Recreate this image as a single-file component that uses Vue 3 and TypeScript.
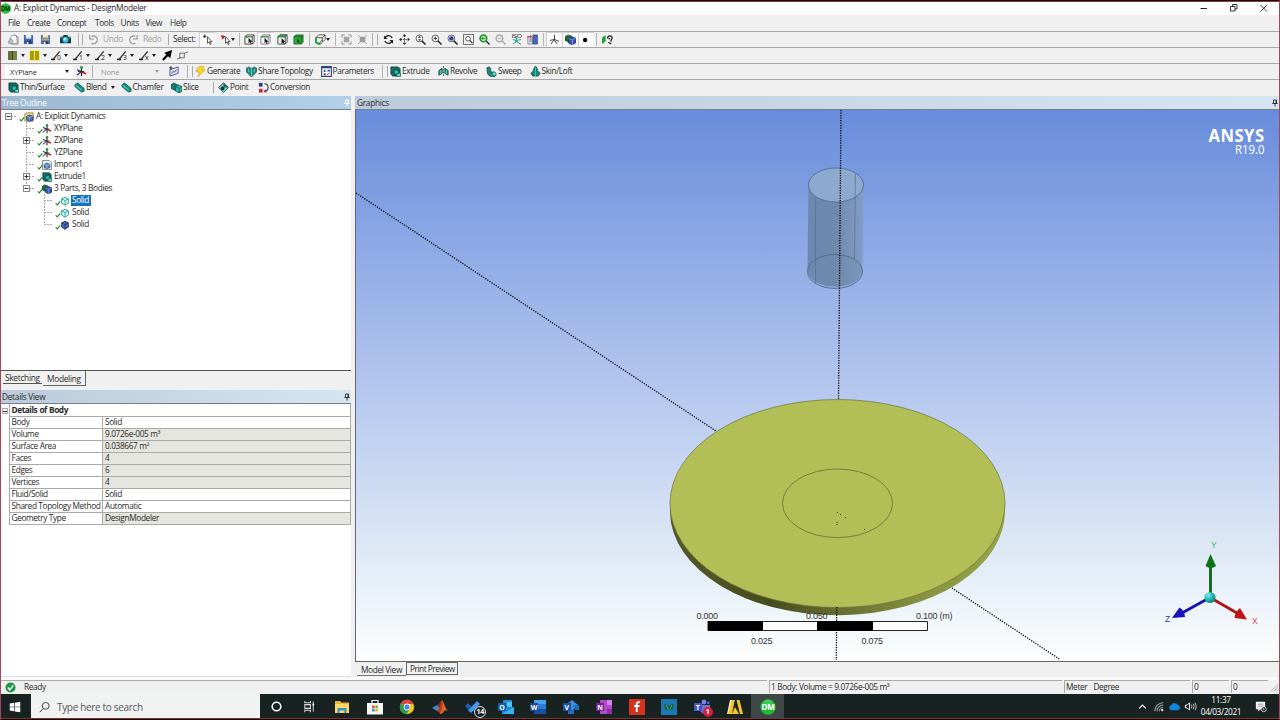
<script setup lang="ts">
/**
 * DesignModeler workspace: toolbars, tree outline, details view,
 * graphics viewport and the desktop taskbar underneath.
 */

interface Tool {
  /** Slot width in the strip */
  w: number
  icon?: string
  label?: string
  kind?: 'sep' | 'grip'
  drop?: boolean
  pressed?: boolean
  disabled?: boolean
}

interface TreeNode {
  level: number
  label: string
  icon: string
  box?: '+' | '-'
  last?: boolean
  selected?: boolean
}

const menus = [
  { label: 'File', w: 19 },
  { label: 'Create', w: 30 },
  { label: 'Concept', w: 38 },
  { label: 'Tools', w: 25.5 },
  { label: 'Units', w: 25 },
  { label: 'View', w: 24.5 },
  { label: 'Help', w: 25 },
]

const mainTools: Tool[] = [
  { icon: 'new', w: 16 },
  { icon: 'save', w: 15 },
  { icon: 'export', w: 18 },
  { icon: 'camera', w: 23 },
  { kind: 'sep', w: 2 },
  { kind: 'grip', w: 7 },
  { icon: 'undo', label: 'Undo', w: 40, disabled: true },
  { icon: 'redo', label: 'Redo', w: 40, disabled: true },
  { kind: 'grip', w: 5 },
  { label: 'Select:', w: 28 },
  { icon: 'pick', w: 17, pressed: true },
  { icon: 'pickmode', w: 22, drop: true },
  { kind: 'sep', w: 3 },
  { icon: 'vertex', w: 16 },
  { icon: 'edge', w: 17, pressed: true },
  { icon: 'face', w: 16 },
  { icon: 'body', w: 17 },
  { kind: 'sep', w: 4 },
  { icon: 'extend', w: 22, drop: true },
  { kind: 'sep', w: 5 },
  { icon: 'expand', w: 16 },
  { icon: 'shrink', w: 16 },
  { kind: 'sep', w: 5 },
  { kind: 'grip', w: 5 },
  { icon: 'rotate', w: 16 },
  { icon: 'pan', w: 16 },
  { icon: 'zoom', w: 16 },
  { icon: 'zoomin', w: 16 },
  { icon: 'zoomfit', w: 16 },
  { icon: 'zoombox', w: 16 },
  { icon: 'zoomprev', w: 16 },
  { icon: 'zoomnext', w: 16 },
  { icon: 'iso', w: 16 },
  { icon: 'look', w: 16 },
  { kind: 'sep', w: 6 },
  { icon: 'axes', w: 16, pressed: true },
  { icon: 'model', w: 16, pressed: true },
  { icon: 'point', w: 16, pressed: true },
  { kind: 'sep', w: 5 },
  { icon: 'lookat', w: 16 },
]

const penTools = ['pen0', 'pen1', 'pen2', 'pen3', 'penx']

const featureTools: Tool[] = [
  { kind: 'sep', w: 3 },
  { kind: 'grip', w: 6 },
  { icon: 'generate', label: 'Generate', w: 51 },
  { icon: 'share', label: 'Share Topology', w: 74.5 },
  { icon: 'params', label: 'Parameters', w: 60 },
  { kind: 'sep', w: 3.5 },
  { kind: 'grip', w: 6 },
  { icon: 'extrude', label: 'Extrude', w: 48 },
  { icon: 'revolve', label: 'Revolve', w: 48 },
  { icon: 'sweep', label: 'Sweep', w: 43.5 },
  { icon: 'skin', label: 'Skin/Loft', w: 50 },
]

const modifyTools: Tool[] = [
  { icon: 'extrude', label: 'Thin/Surface', w: 66 },
  { icon: 'blend', label: 'Blend', w: 46.5, drop: true },
  { icon: 'blend', label: 'Chamfer', w: 50.5 },
  { icon: 'slice', label: 'Slice', w: 37 },
  { kind: 'grip', w: 10 },
  { icon: 'diamond', label: 'Point', w: 40 },
  { icon: 'convert', label: 'Conversion', w: 60 },
]

const tree: TreeNode[] = [
  { level: 0, label: 'A: Explicit Dynamics', icon: 'project', box: '-' },
  { level: 1, label: 'XYPlane', icon: 'plane' },
  { level: 1, label: 'ZXPlane', icon: 'plane', box: '+' },
  { level: 1, label: 'YZPlane', icon: 'plane' },
  { level: 1, label: 'Import1', icon: 'import' },
  { level: 1, label: 'Extrude1', icon: 'extrude', box: '+' },
  { level: 1, label: '3 Parts, 3 Bodies', icon: 'model', box: '-', last: true },
  { level: 2, label: 'Solid', icon: 'solid', selected: true },
  { level: 2, label: 'Solid', icon: 'solid' },
  { level: 2, label: 'Solid', icon: 'solidblue', last: true },
]

const details = [
  { name: 'Body', value: 'Solid' },
  { name: 'Volume', value: '9.0726e-005 m³', locked: true },
  { name: 'Surface Area', value: '0.038667 m²', locked: true },
  { name: 'Faces', value: '4', locked: true },
  { name: 'Edges', value: '6', locked: true },
  { name: 'Vertices', value: '4', locked: true },
  { name: 'Fluid/Solid', value: 'Solid' },
  { name: 'Shared Topology Method', value: 'Automatic' },
  { name: 'Geometry Type', value: 'DesignModeler', locked: true },
]

const apps = [
  'cortana', 'taskview', 'folder', 'store', 'chrome', 'matlab', 'todo', 'outlook',
  'word', 'visio', 'onenote', 'fing', 'workbench', 'teams', 'ansys', 'dm',
]

const guideX = (level: number) => 7 + level * 18
</script>

<template>
  <!-- Icon sprite -->
  <svg class="sprite" aria-hidden="true">
    <symbol id="i-new" viewBox="0 0 12 12"><path d="M4 1.500h5l1 8-6 1-3-2z" fill="#fff" stroke="#a4a8ba" /><path d="M0 9.500l3-5 3 3-3 3.500z" fill="#b9bed2" stroke="#777" stroke-width=".6" /><path d="M7 .7l4 3V11H4" fill="none" stroke="#666" stroke-width=".8" /></symbol>
    <symbol id="i-save" viewBox="0 0 12 12"><path d="M1 1h9l1 1v9H1z" fill="#3f62ad" /><path d="M3 1h6v4H3z" fill="#e7efff" /><path d="M3 7.500h6V11H3z" fill="#1d3264" /><path d="M4 8.500h2V11H4z" fill="#eee" /></symbol>
    <symbol id="i-export" viewBox="0 0 12 12"><path d="M1 1h9l1 1v9H1z" fill="#5573ad" /><path d="M3 1h6v3H3z" fill="#efe7c0" /><path d="M2 5h8v2H2z" fill="#c0a95a" /><path d="M3 8h6v3H3z" fill="#2b3d66" /><path d="M4 8.500h2V11H4z" fill="#eee" /></symbol>
    <symbol id="i-camera" viewBox="0 0 12 12"><path d="M0 3h3l1-2h4l1 2h3v7H0z" fill="#20303a" /><circle cx="6" cy="6.300" r="3.300" fill="#2fc7e0" /><circle cx="5.300" cy="5.600" r="1.300" fill="#c7fbff" /><path d="M0 3h2v1.500H0zM10 3h2v1.500h-2z" fill="#4fa8b8" /></symbol>
    <symbol id="i-undo" viewBox="0 0 12 12"><path d="M4 2.500a4.300 4.300 0 1 1 0 7.700M2 1v4.500h4.500" fill="none" stroke="#8f8f8f" stroke-width="1.200" /></symbol>
    <symbol id="i-redo" viewBox="0 0 12 12"><path d="M8 2.500a4.300 4.300 0 1 0 0 7.700M10 1v4.500H5.500" fill="none" stroke="#8f8f8f" stroke-width="1.200" /></symbol>
    <symbol id="i-pick" viewBox="0 0 12 12"><path d="M3 .5v4M1 2.500h4" stroke="#222" /><path d="M6 3v7l1.700-1.500 1.300 3 1-.5-1.300-2.700H11z" fill="#fff" stroke="#222" stroke-width=".8" /></symbol>
    <symbol id="i-pickmode" viewBox="0 0 12 12"><path d="M1 1l5 1.500L2.500 6z" fill="#b02020" /><path d="M6 3v7l1.700-1.500 1.300 3 1-.5-1.300-2.700H11z" fill="#fff" stroke="#222" stroke-width=".8" /></symbol>
    <symbol id="i-vertex" viewBox="0 0 12 12"><path d="M1 3l2-2h8v8l-2 2H1zM1 3h8v8M9 3l2-2" fill="none" stroke="#2c3a2c" stroke-width=".9" /><circle cx="3" cy="3" r="1.600" fill="#35b835" /><path d="M5 4v6l1.400-1.200L7.500 11l.8-.5-1-2H9z" fill="#111" /></symbol>
    <symbol id="i-edge" viewBox="0 0 12 12"><path d="M1 3l2-2h8v8l-2 2H1zM1 3h8v8M9 3l2-2" fill="none" stroke="#667" stroke-width=".9" /><path d="M1 3h8" stroke="#35a035" stroke-width="1.300" /><path d="M5 4v6l1.400-1.200L7.500 11l.8-.5-1-2H9z" fill="#111" /></symbol>
    <symbol id="i-face" viewBox="0 0 12 12"><path d="M1 3l2-2h8v8l-2 2H1zM1 3h8v8M9 3l2-2" fill="none" stroke="#2c3a2c" stroke-width=".9" /><path d="M1 3l2-2h8L9 3z" fill="#35b845" stroke="#1c5c24" stroke-width=".6" /><path d="M5 4.500v6l1.400-1.200L7.500 11l.8-.5-1-2H9z" fill="#111" /></symbol>
    <symbol id="i-body" viewBox="0 0 12 12"><path d="M1 3l2-2h8v8l-2 2H1z" fill="#27b13a" stroke="#0c5016" stroke-width=".8" /><path d="M1 3h8v8M9 3l2-2" fill="none" stroke="#0c5016" stroke-width=".8" /><path d="M4.500 4.500v5l1.200-1L6.500 10l.6-.4-.7-1.500h1.300z" fill="#0a250d" /></symbol>
    <symbol id="i-extend" viewBox="0 0 12 12"><path d="M1 4l3-3h7L8 4zM8 4v5l3-3V1" fill="#fff" stroke="#222" stroke-width=".8" /><path d="M1 4v5l3 2 3-1" fill="none" stroke="#15a035" stroke-width="2" /><path d="M5 9.500l3-3" stroke="#c22" /></symbol>
    <symbol id="i-expand" viewBox="0 0 12 12"><path d="M3 3h6v6H3z" fill="#a5a5a5" /><path d="M1 4V1h3M8 1h3v3M11 8v3H8M4 11H1V8" fill="none" stroke="#8d8d8d" /></symbol>
    <symbol id="i-shrink" viewBox="0 0 12 12"><path d="M3 3h6v6H3z" fill="#999" /><path d="M1 1l2 2M11 1L9 3M1 11l2-2M11 11L9 9" stroke="#999" /></symbol>
    <symbol id="i-rotate" viewBox="0 0 12 12"><path d="M2 5a4.200 4.200 0 0 1 8-.7M10 7a4.200 4.200 0 0 1-8 .7" fill="none" stroke="#222" stroke-width="1.300" /><path d="M1 1.500v4h4zM11 10.500v-4H7z" fill="#222" /></symbol>
    <symbol id="i-pan" viewBox="0 0 12 12"><path d="M6 2v8M2 6h8" stroke="#333" stroke-dasharray="1.500 1" /><path d="M6 0l2 2.500H4zM6 12l2-2.500H4zM0 6l2.500-2v4zM12 6L9.500 4v4z" fill="#222" /></symbol>
    <symbol id="i-lens" viewBox="0 0 12 12"><circle cx="4.800" cy="4.800" r="3.700" fill="#fff" fill-opacity=".7" stroke="#444" stroke-width=".9" /><path d="M7.500 7.500l4 4" stroke="#222" stroke-width="1.600" /></symbol>
    <symbol id="i-zoom" viewBox="0 0 12 12"><use href="#i-lens" /><path d="M4.800 2l1.700 2H3.100zM4.800 7.600l1.700-2H3.100z" fill="#333" /></symbol>
    <symbol id="i-zoomin" viewBox="0 0 12 12"><use href="#i-lens" /><path d="M4.800 2.800v4M2.800 4.800h4" stroke="#333" /></symbol>
    <symbol id="i-zoomfit" viewBox="0 0 12 12"><use href="#i-lens" /><circle cx="4.800" cy="4.800" r="2.400" fill="#1c2c80" /><path d="M3.500 3.500l2.600 2.600" stroke="#8fa5e8" stroke-width=".7" /></symbol>
    <symbol id="i-zoombox" viewBox="0 0 12 12"><path d="M.5.500h11v11H.5z" fill="#eee" stroke="#444" stroke-width=".8" /><circle cx="5.500" cy="5.200" r="2.500" fill="#fff" stroke="#333" stroke-width=".8" /><path d="M7.300 7l3 3" stroke="#222" stroke-width="1.200" /></symbol>
    <symbol id="i-zoomprev" viewBox="0 0 12 12"><circle cx="4.800" cy="4.800" r="3.600" fill="#e8ffe8" stroke="#179a1d" stroke-width="1.800" /><path d="M3 4.800h4M4.800 3L3 4.800l1.800 1.800" fill="none" stroke="#147a18" /><path d="M8 8l3.500 3.500" stroke="#222" stroke-width="1.500" /></symbol>
    <symbol id="i-zoomnext" viewBox="0 0 12 12"><circle cx="4.800" cy="4.800" r="3.600" fill="#eee" stroke="#aaa" stroke-width="1.600" /><path d="M3 4.800h4" stroke="#aaa" /><path d="M8 8l3.500 3.500" stroke="#aaa" stroke-width="1.500" /></symbol>
    <symbol id="i-iso" viewBox="0 0 12 12"><text x=".5" y="4.200" font-size="5.500" textLength="11" lengthAdjust="spacingAndGlyphs" fill="#111">ISO</text><path d="M6 4v5M6 7L2 6M6 7l5-1M6 8l-4 3M6 8l4 3" stroke="#1d9a8a" fill="none" /><circle cx="6" cy="7.500" r="1.500" fill="#18b0a0" /><path d="M9 10l2 1" stroke="#c33" /></symbol>
    <symbol id="i-look" viewBox="0 0 12 12"><path d="M6.500 1h5v10h-5z" fill="#4a66bd" stroke="#1b2c66" stroke-width=".6" /><path d="M1 3h5v8H1z" fill="#e6ecff" stroke="#556" stroke-width=".7" /><path d="M2.500 5h3v4h-3z" fill="#9aa7cf" /><path d="M0 3h5M4 1v4" stroke="#c33" /></symbol>
    <symbol id="i-axes" viewBox="0 0 12 12"><path d="M6 1v6M6 6l5 2M6 6L1 7M6 6l-4 5M6 7l3 4" stroke="#222" stroke-width=".9" fill="none" /></symbol>
    <symbol id="i-model" viewBox="0 0 12 12"><path d="M0 3l3-2 4 1v5L4 9 0 7z" fill="#1c6b32" stroke="#0b2e18" stroke-width=".5" /><path d="M4 5l4-2 4 1.500v5L8 12 4 10z" fill="#3550ad" stroke="#111c50" stroke-width=".6" /><path d="M4 5l4 1.500L12 4.500M8 6.500V12" fill="none" stroke="#a7b8ee" stroke-width=".7" /></symbol>
    <symbol id="i-point" viewBox="0 0 12 12"><circle cx="4.500" cy="6.500" r="2.400" fill="#000" /></symbol>
    <symbol id="i-lookat" viewBox="0 0 12 12"><path d="M0 4l4-3v7L0 11z" fill="#1fa33a" /><path d="M6 5c0-4 5-4 5-.5 0 2-2 1.500-1 4M7 9l3 2" fill="none" stroke="#222" stroke-width="1.400" /><circle cx="8" cy="5" r="1" fill="#222" /></symbol>

    <symbol id="i-pen" viewBox="0 0 12 12"><path d="M2.500 10L9.500 1.500" stroke="#333" stroke-width="1.500" /><path d="M0 10.300h4.500" stroke="#222" stroke-width="1.700" /></symbol>
    <symbol id="i-pen0" viewBox="0 0 12 12"><use href="#i-pen" /><text x="6.500" y="11" font-size="7.500" fill="#222">0</text></symbol>
    <symbol id="i-pen1" viewBox="0 0 12 12"><use href="#i-pen" /><text x="6.500" y="11" font-size="7.500" fill="#222">1</text></symbol>
    <symbol id="i-pen2" viewBox="0 0 12 12"><use href="#i-pen" /><text x="6.500" y="11" font-size="7.500" fill="#222">2</text></symbol>
    <symbol id="i-pen3" viewBox="0 0 12 12"><use href="#i-pen" /><text x="6.500" y="11" font-size="7.500" fill="#222">3</text></symbol>
    <symbol id="i-penx" viewBox="0 0 12 12"><use href="#i-pen" /><text x="6.500" y="11" font-size="7.500" fill="#222">x</text></symbol>
    <symbol id="i-arrow" viewBox="0 0 12 12"><path d="M1 11l5-5.500" stroke="#000" stroke-width="2.400" /><path d="M11 0L9 9 2.500 3z" fill="#000" /></symbol>
    <symbol id="i-coedge" viewBox="0 0 12 12"><path d="M0 10l4-1.500M3 3.500h5v5H3zM8 3.500L12 2" fill="none" stroke="#555" stroke-width=".9" /></symbol>

    <symbol id="i-plane" viewBox="0 0 12 12"><path d="M6 2v9" stroke="#222" stroke-width="1.300" /><path d="M6 6L1 4M6 6l-5 4" stroke="#262a78" stroke-width="1.200" /><path d="M6 6.500l5 2" stroke="#c01818" stroke-width="1.700" /><circle cx="6" cy="1.600" r="1.500" fill="#1d9a2b" /><path d="M2 6h7" stroke="#222" stroke-width=".9" /></symbol>
    <symbol id="i-sketch" viewBox="0 0 12 12"><path d="M1 4l9-3v7l-9 3z" fill="#dfe3f7" stroke="#3b3f86" stroke-width=".9" /><path d="M3 8c1-4 3 1 5-4" fill="none" stroke="#3b3f86" /><path d="M0 2h4M2 0v4" stroke="#222" stroke-width=".9" /></symbol>
    <symbol id="i-generate" viewBox="0 0 12 12"><path d="M5 0h5L7.500 4H11L3 12l2-5.500H1.500z" fill="#ffd91a" stroke="#a98600" stroke-width=".5" /><path d="M1 2l1.500 1M.5 5H2" stroke="#b89a10" stroke-width=".8" /></symbol>
    <symbol id="i-share" viewBox="0 0 12 12"><path d="M0 3l3-2 3 2 3-2 3 2v3l-6 6-6-6z" fill="#1f8a80" stroke="#0c3f3c" stroke-width=".7" /><path d="M3 3v4M6 3v8M9 3v4" stroke="#9be8dd" stroke-width=".7" /></symbol>
    <symbol id="i-params" viewBox="0 0 12 12"><path d="M.7.700h10.600v10.600H.7z" fill="#fff" stroke="#27467c" stroke-width="1.200" /><path d="M1 1h10v1.500H1z" fill="#27467c" /><path d="M3 4v2.500h2V4zM7 4h3v2H7z" fill="#2d58b8" /><path d="M3 8h2v2H3z" fill="#333" /><path d="M6.500 9.500l3-2" stroke="#c23" /></symbol>
    <symbol id="i-extrude" viewBox="0 0 12 12"><path d="M1 1h8l2 2v8H3L1 9z" fill="#126d64" stroke="#07322e" stroke-width=".8" /><path d="M4.500 4.500H9V9H4.500z" fill="#2fc0b0" stroke="#083d38" stroke-width=".7" /><path d="M7.500 8h4v3.500h-4z" fill="#4fdccb" stroke="#083d38" stroke-width=".5" /></symbol>
    <symbol id="i-revolve" viewBox="0 0 12 12"><path d="M4.500 2.500L1 5v5l3.500-2zM7.500 2.500L11 5v5L7.500 8z" fill="#2aa598" stroke="#0c4a44" stroke-width="1" /><path d="M6 0v12" stroke="#0c4a44" stroke-width=".9" stroke-dasharray="2 1" /><path d="M3 4.500v4M9 4.500v4" stroke="#a2eee4" stroke-width=".6" /></symbol>
    <symbol id="i-sweep" viewBox="0 0 12 12"><path d="M1 2c2-2 5 0 4 2s1 3 3 2.500S12 8 10.500 10.500 3 12 1.500 8z" fill="#178a7e" stroke="#093f3a" stroke-width=".8" /><ellipse cx="9" cy="8.600" rx="1.800" ry="1.500" fill="#5adccd" /></symbol>
    <symbol id="i-skin" viewBox="0 0 12 12"><path d="M6 0l2 3v2l3 3-2 3H3L1 8l3-3V3z" fill="#178a7e" stroke="#093f3a" stroke-width=".8" /><path d="M6 1v10" stroke="#49cdbd" /></symbol>
    <symbol id="i-blend" viewBox="0 0 12 12"><path d="M1 3l3-2 7 6v3l-3 1-7-6z" fill="#178a7e" stroke="#0b4f48" stroke-width=".8" /><path d="M2 3.500L8.500 9" stroke="#3cc8b8" stroke-width="1.200" /></symbol>
    <symbol id="i-slice" viewBox="0 0 12 12"><path d="M0 3l3-2 4 2v5L4 9 0 7z" fill="#157a70" stroke="#083d38" stroke-width=".7" /><path d="M5 5l3-2 4 2v5l-3 2-4-2z" fill="#2fb5a7" stroke="#083d38" stroke-width=".7" /><path d="M5 5l4 2 3-2M9 7v5" fill="none" stroke="#083d38" stroke-width=".6" /></symbol>
    <symbol id="i-diamond" viewBox="0 0 12 12"><path d="M6 1l5.500 5L6 11.500.5 6z" fill="#8fc4bf" stroke="#13635b" /><path d="M6 1l5.500 5L6 6z" fill="#17655d" /><circle cx="5" cy="7" r="2" fill="#0a3a36" /></symbol>
    <symbol id="i-convert" viewBox="0 0 12 12"><path d="M1 1h4v4H1z" fill="#223a8a" /><path d="M1 7.500h4v4H1z" fill="#c72a35" /><path d="M7 2c3 0 4 2 4 4s-1 4-4 4" fill="none" stroke="#333" stroke-width="1.100" /><path d="M6 10l3-2v4z" fill="#b02030" /></symbol>
    <symbol id="i-project" viewBox="0 0 12 12"><path d="M1 2l3-1h7v10H1z" fill="#f0ea86" stroke="#6d6a2d" stroke-width=".8" /><path d="M3 5l3.500-1.500L11 5v4.500L6.500 11.500 3 9.500z" fill="#4f6bc0" stroke="#14204f" stroke-width=".7" /><path d="M3 5l3.500 1.500L11 5M6.500 6.500V11" fill="none" stroke="#c3d0f7" stroke-width=".6" /></symbol>
    <symbol id="i-import" viewBox="0 0 12 12"><path d="M.7.700H9L11.300 3v8.300H.7z" fill="#f3f5fa" stroke="#555" stroke-width=".8" /><path d="M2.500 5L6 3.500 9.500 5v4L6 10.500 2.500 9z" fill="#4a8ab8" stroke="#1a3854" stroke-width=".7" /><path d="M2.500 5L6 6.500 9.500 5M6 6.500v4" fill="none" stroke="#c8e6f5" stroke-width=".6" /></symbol>
    <symbol id="i-solid" viewBox="0 0 12 12"><path d="M2 3.500L6 1.500l4 2v5L6 11 2 8.500z" fill="#d9faf6" stroke="#1b9c90" stroke-width="1.100" /><path d="M2 3.500l4 2 4-2M6 5.500V11" fill="none" stroke="#1b9c90" /></symbol>
    <symbol id="i-solidblue" viewBox="0 0 12 12"><path d="M2 3.500L6 1.500l4 2v5L6 11 2 8.500z" fill="#5068c0" stroke="#1c2866" stroke-width="1.100" /><path d="M2 3.500l4 2 4-2M6 5.500V11" fill="none" stroke="#1c2866" stroke-width=".9" /></symbol>
    <symbol id="i-check" viewBox="0 0 8 8"><path d="M1 4.500l2 2L7 1.800" fill="none" stroke="#1c8a22" stroke-width="1.500" /></symbol>
    <symbol id="i-pin" viewBox="0 0 8 8"><path d="M2.500 1h3v3.500h-3zM1.300 4.500h5.400M4 4.500V7.500M5 1v3.500" fill="none" stroke="currentColor" stroke-width=".9" /></symbol>

    <symbol id="i-windows" viewBox="0 0 16 16"><path d="M2 4l5-.8v4.500H2zM7.700 3.100L14 2v5.700H7.700zM2 8.400h5v4.500L2 12.100zM7.700 8.400H14v5.700L7.700 13z" fill="#fff" /></symbol>
    <symbol id="i-search" viewBox="0 0 16 16"><circle cx="9.500" cy="6" r="4.200" fill="none" stroke="#333" stroke-width="1.100" /><path d="M6.500 9.300L2 13.800" stroke="#333" stroke-width="1.200" /></symbol>
    <symbol id="i-cortana" viewBox="0 0 16 16"><circle cx="8" cy="8" r="4.600" fill="none" stroke="#fff" stroke-width="1.700" /></symbol>
    <symbol id="i-taskview" viewBox="0 0 16 16"><path d="M3 2v2h6V2M3 14v-2h6v2M3 6h6v4H3z" fill="none" stroke="#ddd" stroke-width="1.100" /><path d="M12 2.500v11" stroke="#ddd" /><path d="M11.200 5h1.800v2h-1.800z" fill="#fff" /></symbol>
    <symbol id="i-folder" viewBox="0 0 16 16"><path d="M1 2h5l1.500 1.500H15V14H1z" fill="#e9b53a" /><path d="M1 5h14v9H1z" fill="#ffd767" /><path d="M3.500 9h9v5h-2v-2.500h-5V14h-2z" fill="#3c8fc7" /></symbol>
    <symbol id="i-store" viewBox="0 0 16 16"><path d="M5 5V1.500h6V5" fill="none" stroke="#fff" stroke-width="1.200" /><path d="M0 4h16v11.500H0z" fill="#f7f7f7" /><path d="M5 6.500h2.700v2.700H5z" fill="#e5502b" /><path d="M8.300 6.500H11v2.700H8.300z" fill="#7cb82f" /><path d="M5 9.800h2.700v2.700H5z" fill="#2a9fe0" /><path d="M8.300 9.800H11v2.700H8.300z" fill="#f7b50c" /></symbol>
    <symbol id="i-chrome" viewBox="0 0 16 16"><circle cx="8" cy="8" r="7.200" fill="#f2c313" /><path d="M8 8L1.800 4.400A7.200 7.200 0 0 1 14.500 5H8z" fill="#dc4433" /><path d="M8 8L1.800 4.400A7.200 7.200 0 0 0 7.500 15.200L11 9.500z" fill="#2c9c4a" /><circle cx="8" cy="8" r="3.400" fill="#fff" /><circle cx="8" cy="8" r="2.600" fill="#4285f4" /></symbol>
    <symbol id="i-matlab" viewBox="0 0 16 16"><path d="M0 9l5-3 3 3-3 3z" fill="#4a86c0" /><path d="M5 6c3-1 3-4 5-5l-2 8z" fill="#8a2a1a" /><path d="M10 1c2 2 3 8 6 11-2-1-3-1-4 0-1 2-2 3-4 3 0-2-1-3-3-3 3-2 4-7 5-11z" fill="#e0662a" /><path d="M10 1c1 4 1 7-2 14 0-2-1-3-3-3 3-2 4-7 5-11z" fill="#b63a1d" /></symbol>
    <symbol id="i-todo" viewBox="0 0 16 16"><path d="M0 7l3-3 4 4-3.200 3.200z" fill="#1f5aa8" /><path d="M3 11.500L12 2l3 3-9 9z" fill="#4596ec" /></symbol>
    <symbol id="i-outlook" viewBox="0 0 16 16"><path d="M5 1h9v6H5z" fill="#2a8ad8" /><path d="M9 3h5v5H9z" fill="#50c5f5" /><path d="M4 8h12v7H4z" fill="#1b86d3" /><path d="M4 15l12-7v7z" fill="#35b2f0" /><path d="M0 4h8v8H0z" fill="#0c5ea8" /><text class="glyph" x="1.200" y="10.500">O</text></symbol>
    <symbol id="i-word" viewBox="0 0 16 16"><path d="M4 1h12v4.500H4z" fill="#48a5ee" /><path d="M4 5h12v5H4z" fill="#2b7cd3" /><path d="M4 10h12v5H4z" fill="#1a4fa3" /><path d="M0 4h8v8H0z" fill="#174a96" /><text class="glyph" x=".7" y="10.500">W</text></symbol>
    <symbol id="i-visio" viewBox="0 0 16 16"><path d="M9 1l6 5-5 5H5V4z" fill="#3d8fd8" /><path d="M10 6h6v5h-4z" fill="#1f6fc0" /><path d="M5 11h6v4H5z" fill="#2f66b5" /><path d="M0 4h8v8H0z" fill="#1853a0" /><text class="glyph" x="1.500" y="10.500">V</text></symbol>
    <symbol id="i-onenote" viewBox="0 0 16 16"><path d="M4 1h12v14H4z" fill="#b04bc8" /><path d="M11 1h5v5h-5z" fill="#d086e8" /><path d="M11 10h5v5h-5z" fill="#8e2fa8" /><path d="M0 4h8v8H0z" fill="#76219a" /><text class="glyph" x="1.300" y="10.500">N</text></symbol>
    <symbol id="i-fing" viewBox="0 0 16 16"><path d="M0 0h16v16H0z" fill="#d4321f" /><path d="M11 3.500c-2-1-3.300 0-3.300 2V13M5 7h5.500" fill="none" stroke="#fff" stroke-width="1.900" /></symbol>
    <symbol id="i-workbench" viewBox="0 0 16 16"><path d="M0 0h16v16H0z" fill="#1c78b4" /><path d="M3 5l4 1 1 2 1-2 4-1-1.500 6L8 10l-3.500 1z" fill="#1b5c3c" /><path d="M5 6l2 4M11 6L9 10" stroke="#3fae6a" /></symbol>
    <symbol id="i-teams" viewBox="0 0 16 16"><circle cx="10" cy="3" r="2.400" fill="#7b83eb" /><circle cx="14.300" cy="3.800" r="1.500" fill="#5059c9" /><path d="M6 6h10v5a4 4 0 0 1-4 4c-3 0-5-1-6-4z" fill="#6a72dc" /><path d="M0 4h8v8H0z" fill="#4b53bc" /><text class="glyph" x="1.700" y="10.500">T</text></symbol>
    <symbol id="i-ansys" viewBox="0 0 16 16"><path d="M3 1h4.500L4 15H0z" fill="#f3efe0" /><path d="M4.500 1h3.200L5 15H1z" fill="#f6c62a" /><path d="M8 8l4 7H5z" fill="#f6c62a" /><path d="M9.500 1h3L16 15h-3z" fill="#f6c62a" /></symbol>
    <symbol id="i-dm" viewBox="0 0 16 16"><circle cx="8" cy="8" r="7.700" fill="#22b838" /><circle cx="8" cy="5" r="4.500" fill="#55d868" fill-opacity=".6" /><text x="1.500" y="11" font-size="8.500" font-weight="700" textLength="13" lengthAdjust="spacingAndGlyphs" fill="#fff">DM</text></symbol>
  </svg>

  <div class="screen">
    <div class="titlebar">
      <svg class="appicon" viewBox="0 0 12 12"><circle cx="6" cy="6" r="5.800" fill="#28c437" /><text x="1" y="9" font-size="7.500" font-weight="700" textLength="10" lengthAdjust="spacingAndGlyphs" fill="#062c0a">DM</text></svg>
      <span class="apptitle">A: Explicit Dynamics - DesignModeler</span>
      <div class="wincontrols">
        <svg viewBox="0 0 10 10"><path d="M1.500 5.500h6.500" stroke="#222" /></svg>
        <svg viewBox="0 0 10 10"><path d="M1.500 3.500h4.500v4.500h-4.500zM3.500 3.500v-2h4.500v4.500h-2" fill="none" stroke="#222" stroke-width=".9" /></svg>
        <svg viewBox="0 0 10 10"><path d="M1.500 2l6.500 6.500M8 2l-6.500 6.500" stroke="#222" stroke-width=".9" /></svg>
      </div>
    </div>

    <div class="menubar">
      <span v-for="m in menus" :key="m.label" :style="{ width: m.w + 'px' }">{{ m.label }}</span>
    </div>

    <div class="strip">
      <div
        v-for="(t, i) in mainTools"
        :key="i"
        class="tool"
        :class="[t.kind, { pressed: t.pressed, disabled: t.disabled, labelled: t.label, bare: !t.icon }]"
        :style="{ width: t.w + 'px' }"
      >
        <svg v-if="t.icon" class="ico"><use :href="'#i-' + t.icon" /></svg>
        <span v-if="t.label">{{ t.label }}</span>
        <i v-if="t.drop" class="caret" />
      </div>
    </div>

    <div class="strip pens">
      <div class="tool pen"><i class="swatch olive" /><i class="caret" /></div>
      <div class="tool pen"><i class="swatch yellow" /><i class="caret" /></div>
      <div v-for="p in penTools" :key="p" class="tool pen">
        <svg class="ico"><use :href="'#i-' + p" /></svg><i class="caret" />
      </div>
      <svg class="ico arrow"><use href="#i-arrow" /></svg>
      <svg class="ico coedge"><use href="#i-coedge" /></svg>
    </div>

    <div class="strip">
      <div class="combo plane-combo"><span>XYPlane</span><i class="caret" /></div>
      <div class="tool planebtn"><svg class="ico"><use href="#i-plane" /></svg></div>
      <div class="tool sep rule" />
      <div class="combo sketch-combo"><span>None</span><i class="caret" /></div>
      <div class="tool sketchbtn"><svg class="ico"><use href="#i-sketch" /></svg></div>
      <div
        v-for="(t, i) in featureTools"
        :key="i"
        class="tool"
        :class="[t.kind, { labelled: t.label }]"
        :style="{ width: t.w + 'px' }"
      >
        <svg v-if="t.icon" class="ico"><use :href="'#i-' + t.icon" /></svg>
        <span v-if="t.label">{{ t.label }}</span>
      </div>
    </div>

    <div class="strip modify">
      <div
        v-for="(t, i) in modifyTools"
        :key="i"
        class="tool"
        :class="[t.kind, { labelled: t.label }]"
        :style="{ width: t.w + 'px' }"
      >
        <svg v-if="t.icon" class="ico"><use :href="'#i-' + t.icon" /></svg>
        <span v-if="t.label">{{ t.label }}</span>
        <i v-if="t.drop" class="caret" />
      </div>
    </div>

    <div class="workspace">
      <div class="side">
        <div class="panel-head active">
          <span>Tree Outline</span>
          <svg class="pin"><use href="#i-pin" /></svg>
        </div>
        <div class="tree">
          <div v-for="(n, i) in tree" :key="i" class="node">
            <svg class="guide" height="12" :width="guideX(n.level) + 9">
              <path
                v-if="n.level > 0"
                :d="`M${guideX(n.level) + 0.5} 0V${n.last ? 6 : 12}`"
                stroke="#aaa"
                stroke-dasharray="2 1"
              />
              <path :d="`M${guideX(n.level)} 6.500h9`" stroke="#aaa" stroke-dasharray="2 1" />
              <g v-if="n.box">
                <rect :x="guideX(n.level) - 2.5" y="3.500" width="6" height="6" fill="#fff" stroke="#888" />
                <path :d="`M${guideX(n.level) - 1.5} 6.500h4`" stroke="#333" />
                <path v-if="n.box === '+'" :d="`M${guideX(n.level) + 0.5} 4.500v4`" stroke="#333" />
              </g>
            </svg>
            <svg class="check"><use href="#i-check" /></svg>
            <svg class="node-icon"><use :href="'#i-' + n.icon" /></svg>
            <span class="node-label" :class="{ selected: n.selected }">{{ n.label }}</span>
          </div>
        </div>
        <div class="side-tabs">
          <span class="tab-sketching">Sketching</span>
          <span class="tab-modeling">Modeling</span>
        </div>
        <div class="panel-head">
          <span>Details View</span>
          <svg class="pin"><use href="#i-pin" /></svg>
        </div>
        <div class="details">
          <div class="gutter"><i class="collapse" /></div>
          <div class="grid">
            <div class="grid-title">Details of Body</div>
            <div v-for="d in details" :key="d.name" class="grid-row">
              <span class="grid-name">{{ d.name }}</span>
              <span class="grid-value" :class="{ locked: d.locked }">{{ d.value }}</span>
            </div>
          </div>
        </div>
      </div>

      <div class="graphics">
        <div class="panel-head">
          <span>Graphics</span>
          <svg class="pin"><use href="#i-pin" /></svg>
        </div>
        <svg class="viewport" viewBox="356 110 923 551" preserveAspectRatio="none">
          <defs>
            <linearGradient id="sky" x1="0" y1="0" x2="0" y2="1">
              <stop offset="0" stop-color="#688cdc" />
              <stop offset=".5" stop-color="#b3c6ee" />
              <stop offset=".78" stop-color="#dbe6f5" />
              <stop offset="1" stop-color="#fdfffd" />
            </linearGradient>
            <linearGradient id="rim" x1="0" y1="0" x2="1" y2="0">
              <stop offset="0" stop-color="#535a25" />
              <stop offset=".3" stop-color="#474c1e" />
              <stop offset=".5" stop-color="#666d30" />
              <stop offset=".75" stop-color="#87913f" />
              <stop offset="1" stop-color="#98a44a" />
            </linearGradient>
            <linearGradient id="wall" x1="0" y1="0" x2="1" y2="0">
              <stop offset="0" stop-color="#6c87b2" />
              <stop offset=".5" stop-color="#6f88ae" />
              <stop offset="1" stop-color="#829dc6" />
            </linearGradient>
            <radialGradient id="ball" cx=".35" cy=".3" r=".8">
              <stop offset="0" stop-color="#7af0e6" />
              <stop offset=".5" stop-color="#25b5ae" />
              <stop offset="1" stop-color="#0c706e" />
            </radialGradient>
          </defs>
          <rect x="356" y="110" width="923" height="551" fill="url(#sky)" />

          <!-- Construction axes behind the solids -->
          <path class="axis" d="M356 193L716 431" />
          <path class="axis" d="M952 588L1060 659.500" />

          <!-- Projectile -->
          <path d="M808.500 185L807.500 271.500A27.700 17 0 0 0 862.500 271.500L863.500 185A27.500 17 0 0 1 808.500 185z" fill="url(#wall)" />
          <ellipse cx="835" cy="271.500" rx="27.500" ry="17" fill="#6f8bab" fill-opacity=".35" stroke="#4c5f77" stroke-width=".7" />
          <ellipse cx="836" cy="185" rx="27.500" ry="17" fill="#8ea9cf" stroke="#4c5f77" stroke-width=".7" />
          <path d="M815.500 198V284M855.500 174L854.500 259" stroke="#546880" stroke-width=".6" />
          <path class="axis" d="M841 110L838.500 400" />

          <!-- Plate -->
          <path d="M670 504v8.500A167.500 104 0 0 0 1005 510v-6z" fill="url(#rim)" />
          <ellipse cx="837.500" cy="503.500" rx="167.500" ry="104" fill="#b2be56" stroke="#6d743b" stroke-width=".7" />
          <ellipse cx="837.500" cy="503.300" rx="55" ry="34.300" fill="none" stroke="#686f37" stroke-width=".8" />
          <path d="M837 512h1v1h-1zM840 514h1v1h-1zM845 517h1v1h-1zM836.500 522h1v1h-1zM836.500 524h1v1h-1zM864 529h1v1h-1z" fill="#333718" />
          <path class="axis" d="M836.700 607L836.300 660" />

          <!-- Scale -->
          <path d="M708 621.500h219.500v9H708z" fill="#fff" stroke="#222" />
          <path d="M708 621h55v10h-55zM817 621h56v10h-56z" fill="#000" />
          <g class="scale-text">
            <text x="696.500" y="619" textLength="21.500">0.000</text>
            <text x="806" y="619" textLength="21.500">0.050</text>
            <text x="916" y="619" textLength="36.500">0.100 (m)</text>
            <text x="751" y="644" textLength="21.500">0.025</text>
            <text x="861.500" y="644" textLength="21.500">0.075</text>
          </g>

          <!-- Orientation triad -->
          <path d="M1210.500 597V566" stroke="#0b6412" stroke-width="2.800" />
          <path d="M1210.500 554L1216 566q-5 4-10.500 0z" fill="#0c7416" />
          <path d="M1210 597.500L1237 613" stroke="#b01414" stroke-width="2.800" />
          <path d="M1247 619.500l-12.500-1.500q.5-6 5.500-10z" fill="#c01616" />
          <path d="M1210 597.500L1182 613" stroke="#1212b0" stroke-width="2.800" />
          <path d="M1172 618l7.500-10.500q5 3 5.500 9.500z" fill="#1414b8" />
          <circle cx="1210" cy="597.500" r="5.500" fill="url(#ball)" />
          <g class="triad-text">
            <text x="1211" y="547.500" fill="#3db85c">Y</text>
            <text x="1252" y="624" fill="#d0455a">X</text>
            <text x="1165" y="622" fill="#3a3a90">Z</text>
          </g>

          <text class="brand" x="1208.500" y="141.500" textLength="56" lengthAdjust="spacingAndGlyphs">ANSYS</text>
          <text class="release" x="1235" y="154" textLength="29.500" lengthAdjust="spacingAndGlyphs">R19.0</text>
        </svg>
        <div class="view-tabs">
          <span class="tab-model">Model View</span>
          <span class="tab-print">Print Preview</span>
        </div>
      </div>
    </div>

    <div class="statusbar">
      <div class="status-ready">
        <svg viewBox="0 0 12 12"><circle cx="6" cy="6" r="5.500" fill="#159a45" /><path d="M3 6l2.300 2.500L9 3.800" fill="none" stroke="#fff" stroke-width="1.600" /></svg>
        <span>Ready</span>
      </div>
      <div class="status-cell selection">1 Body: Volume = 9.0726e-005 m³</div>
      <div class="status-cell units"><span>Meter</span><span>Degree</span></div>
      <div class="status-cell coord">0</div>
      <div class="status-cell coord">0</div>
      <svg class="sizer" viewBox="0 0 10 12"><path d="M1 11L9 3M4 11l5-5M7 11l2-2" stroke="#aaa" /></svg>
    </div>

    <div class="taskbar">
      <div class="start"><svg><use href="#i-windows" /></svg></div>
      <div class="search"><svg><use href="#i-search" /></svg><span>Type here to search</span></div>
      <div class="apps">
        <div v-for="a in apps" :key="a" class="app" :class="a">
          <svg><use :href="'#i-' + a" /></svg>
          <b v-if="a === 'todo'" class="badge dark">14</b>
          <b v-if="a === 'teams'" class="badge red">1</b>
        </div>
      </div>
      <div class="tray">
        <svg viewBox="0 0 14 14"><path d="M3.500 9L7 5.500 10.500 9" fill="none" stroke="#fff" stroke-width="1.200" /></svg>
        <svg viewBox="0 0 14 14"><path d="M3 12A9 9 0 0 1 12 3M5.500 12A6.500 6.500 0 0 1 12 5.500M8 12a4 4 0 0 1 4-4" fill="none" stroke="#aaa" stroke-width="1.100" /><circle cx="11" cy="11" r="1.200" fill="#fff" /></svg>
        <svg viewBox="0 0 14 14"><path d="M3.500 11a2.800 2.800 0 0 1 0-5.500 4 4 0 0 1 7-.3A3 3 0 0 1 11 11z" fill="#1583d8" /></svg>
        <svg viewBox="0 0 14 14"><path d="M1.500 5.500h2L6 3v8L3.500 8.500h-2z" fill="none" stroke="#fff" /><path d="M8 5q1 2 0 4M10 4q1.800 3 0 6M12 3q2.500 4 0 8" fill="none" stroke="#ddd" stroke-width=".9" /></svg>
        <div class="clock"><span>11:37</span><span>04/03/2021</span></div>
        <svg class="notify" viewBox="0 0 14 14"><path d="M2 2h10v8H7l-2.500 2.500V10H2z" fill="#f2f2f2" /><path d="M4 4.500h6M4 6.500h6" stroke="#777" stroke-width=".7" /><circle cx="10.500" cy="10" r="2.700" fill="#222" stroke="#eee" stroke-width=".8" /><path d="M10 8.500v2h1.500" fill="none" stroke="#eee" stroke-width=".7" /></svg>
      </div>
    </div>
  </div>
</template>

<style>
body {
  margin: 0;
  background: #000;
}
</style>

<style scoped>
.sprite {
  display: none;
}

.screen {
  box-sizing: border-box;
  width: 1280px;
  height: 720px;
  display: flex;
  flex-direction: column;
  overflow: hidden;
  border: 1px solid #a3485a;
  border-top-color: #1a0508;
  border-bottom-color: #000;
  background: #f0f0f0;
  color: #2a2a2a;
  font-family: 'Open Sans', 'Noto Sans', sans-serif;
  font-size: 8.3px;
  letter-spacing: -0.36px;
  line-height: 12px;
  white-space: nowrap;
}

svg {
  display: block;
  flex: none;
}

.glyph {
  font-size: 7px;
  font-weight: 700;
  letter-spacing: 0;
  fill: #fff;
}

/* Title and menu */
.titlebar {
  display: flex;
  align-items: center;
  height: 14px;
  flex: none;
  background: #fff;
  border-top: 1px solid #8c3a48;
  box-sizing: border-box;
}
.appicon {
  width: 11px;
  height: 11px;
  margin: -1px 0 0 -1px;
}
.apptitle {
  margin: -2px 0 0 3px;
  letter-spacing: -0.27px;
}
.wincontrols {
  display: flex;
  gap: 20px;
  margin: -2px 10px 0 auto;
}
.wincontrols svg {
  width: 10px;
  height: 10px;
}
.menubar {
  display: flex;
  align-items: center;
  height: 16px;
  flex: none;
  padding-left: 7px;
}

/* Toolbars */
.strip {
  display: flex;
  align-items: center;
  box-sizing: border-box;
  height: 16px;
  flex: none;
  padding-left: 4px;
  border-top: 1px solid #a6a6a6;
}
.tool {
  display: flex;
  align-items: center;
  justify-content: center;
  box-sizing: border-box;
  height: 15px;
  flex: none;
}
.tool.labelled {
  justify-content: flex-start;
  gap: 1px;
}
.tool.labelled span {
  margin-top: -1px;
}
.tool.bare {
  padding-left: 2px;
}
.tool.disabled {
  color: #a0a0a0;
  padding-left: 2px;
  gap: 4px;
}
.tool.pressed {
  background: #fafafa;
  box-shadow: inset 1px 1px #d2d2d2;
}
.ico {
  width: 11px;
  height: 11px;
}
.tool.sep {
  background: linear-gradient(#b4b4b4, #b4b4b4) center / 1px 13px no-repeat;
}
.tool.grip {
  background: linear-gradient(#aaa, #aaa) center / 1px 11px no-repeat;
}
.caret {
  flex: none;
  border: 2.5px solid transparent;
  border-top: 3px solid #222;
  border-bottom: 0;
}
.labelled .caret {
  margin-left: 4px;
}
.pens {
  padding-left: 6px;
}
.pen {
  width: 22px;
  justify-content: flex-start;
}
.pen .caret {
  margin-left: 1.5px;
}
.swatch {
  width: 9px;
  height: 9px;
  margin: 0 2px 0 1px;
}
.swatch.olive {
  background: linear-gradient(90deg, #66713a 45%, #3f4822 45% 55%, #75804a 55%);
}
.swatch.yellow {
  background: linear-gradient(90deg, #a89c10 45%, #f0e63c 45% 55%, #a89c10 55%);
  box-shadow: 0 0 0 1px #f2ee7a;
}
.arrow {
  margin: 0 4px 0 1px;
}
.combo {
  display: flex;
  align-items: center;
  justify-content: space-between;
  box-sizing: border-box;
  height: 13px;
  padding: 0 4px 0 5px;
  flex: none;
  font-size: 7.5px;
  letter-spacing: -0.15px;
}
.plane-combo {
  width: 68px;
  background: #fff;
}
.planebtn {
  width: 17px;
}
.rule {
  width: 4px;
}
.sketch-combo {
  width: 68px;
  padding-left: 6px;
  margin-left: 1px;
  color: #999;
}
.sketch-combo .caret {
  border-top-color: #999;
}
.sketchbtn {
  width: 23px;
}
.modify {
  height: 17px;
  padding: 0 0 1px 7px;
}

/* Workspace */
.workspace {
  display: flex;
  gap: 4px;
  height: 581px;
  flex: none;
}
.side {
  display: flex;
  flex-direction: column;
  width: 350px;
  height: 581px;
}
.panel-head {
  display: flex;
  align-items: center;
  justify-content: space-between;
  box-sizing: border-box;
  height: 14px;
  flex: none;
  padding: 0 0 0 1px;
  letter-spacing: -0.28px;
  background: linear-gradient(90deg, #bccbdb, #d6e5f2);
  border-bottom: 1px solid #777f88;
}
.panel-head.active {
  color: #fff;
  background: linear-gradient(90deg, #9cb8d2, #b2d0ea);
}
.pin {
  width: 8px;
  height: 8px;
}
.tree {
  box-sizing: border-box;
  height: 261px;
  flex: none;
  background: #fff;
  border-bottom: 1px solid #555;
}
.node {
  display: flex;
  align-items: center;
  height: 12px;
}
.check {
  width: 6px;
  height: 6px;
  margin: 5px 0 0 2px;
}
.node-icon {
  width: 10px;
  height: 10px;
  margin: 1px 0 0 -1px;
}
.node-label {
  padding: 0 1px;
  margin: -1px 0 0 1px;
  line-height: 11px;
}
.node-label.selected {
  margin-top: 0;
  padding-right: 2px;
  color: #fff;
  background: #1571bd;
  line-height: 10px;
  border-bottom: 1px solid #1571bd;
}
.side-tabs {
  display: flex;
  align-items: flex-start;
  height: 19px;
  flex: none;
  letter-spacing: -0.28px;
}
.tab-sketching {
  box-sizing: border-box;
  height: 13px;
  width: 39px;
  margin-left: 2px;
  padding-left: 2px;
  line-height: 13px;
  border-bottom: 1px solid #555;
}
.tab-modeling {
  box-sizing: border-box;
  width: 43px;
  height: 15px;
  margin-left: 1px;
  padding-left: 4px;
  line-height: 15px;
  border: solid #666;
  border-width: 0 1px 1px 0;
}
.details {
  display: flex;
  flex: 1;
  background: #fff;
  border-bottom: 1px solid #ddd;
}
.gutter {
  width: 8px;
  flex: none;
}
.collapse {
  display: block;
  box-sizing: border-box;
  width: 6px;
  height: 6px;
  margin: 4px 0 0 1px;
  border: 1px solid #aaa;
  background: linear-gradient(#333, #333) center / 4px 1px no-repeat;
}
.grid {
  flex: 1;
  align-self: flex-start;
  border-left: 1px solid #aaa;
  border-right: 1px solid #aaa;
}
.grid-title {
  box-sizing: border-box;
  height: 13px;
  padding-left: 1.5px;
  font-weight: 700;
  letter-spacing: -0.6px;
  word-spacing: 0.5px;
  border-bottom: 1px solid #aaa;
}
.grid-row {
  display: flex;
  box-sizing: border-box;
  height: 12px;
  line-height: 10px;
  border-bottom: 1px solid #aaa;
}
.grid-title {
  letter-spacing: -0.45px;
}
.grid-name {
  box-sizing: border-box;
  width: 93px;
  padding-left: 1.5px;
  letter-spacing: -0.38px;
  border-right: 1px solid #aaa;
}
.grid-value {
  flex: 1;
  padding-left: 2px;
}
.grid-value.locked {
  background: #e5e6df;
}

.graphics {
  display: flex;
  flex-direction: column;
  width: 924px;
}
.graphics .panel-head {
  padding-left: 2px;
}
.viewport {
  width: 923px;
  height: 551px;
  border-left: 1px solid #667;
  border-bottom: 1px solid #666;
}
.axis {
  fill: none;
  stroke: #000;
  stroke-width: 1.3;
  stroke-dasharray: 1.2 1.3;
}
.scale-text {
  font-family: 'Liberation Sans', Arial, sans-serif;
  font-size: 9px;
  letter-spacing: 0;
  fill: #333;
}
.triad-text {
  font-family: 'Liberation Sans', Arial, sans-serif;
  font-size: 8.5px;
}
.brand {
  font-size: 18.5px;
  font-weight: 700;
  letter-spacing: 0.5px;
  fill: #fff;
}
.release {
  font-size: 12.5px;
  letter-spacing: 0;
  fill: #fff;
}
.view-tabs {
  display: flex;
  align-items: flex-start;
  padding-left: 2px;
  letter-spacing: -0.36px;
}
.tab-model {
  box-sizing: border-box;
  width: 49px;
  height: 14px;
  padding-left: 4px;
  line-height: 15px;
  border-bottom: 1px solid #777;
}
.tab-print {
  box-sizing: border-box;
  width: 52px;
  height: 13px;
  padding-left: 3px;
  border: 1px solid #666;
  line-height: 11px;
  letter-spacing: -0.48px;
}

/* Status bar */
.statusbar {
  display: flex;
  align-items: stretch;
  box-sizing: border-box;
  height: 17px;
  flex: none;
  padding-top: 3px;
  background: linear-gradient(#fafafa 3px, #f0f0f0 3px);
}
.status-ready {
  display: flex;
  align-items: center;
  box-sizing: border-box;
  width: 766px;
  padding-left: 4px;
  gap: 8px;
  border-top: 1px solid #aaa;
}
.status-ready span {
  margin-top: -2px;
}
.status-ready svg {
  width: 11px;
  height: 11px;
}
.status-cell {
  box-sizing: border-box;
  height: 13px;
  margin-left: 2px;
  padding-left: 1px;
  border: solid #aaa;
  border-width: 1px 0 0 1px;
  line-height: 11px;
}
.selection {
  width: 293px;
}
.units {
  display: flex;
  gap: 6px;
  width: 126px;
  letter-spacing: -0.35px;
}
.coord {
  width: 37px;
}
.sizer {
  width: 9px;
  height: 12px;
  margin: 1px 0 0 auto;
}

/* Taskbar */
.taskbar {
  display: flex;
  align-items: stretch;
  box-sizing: border-box;
  height: 25px;
  flex: none;
  background: #182221;
  border-bottom: 1px solid #8c2a32;
}
.start {
  display: flex;
  align-items: center;
  justify-content: center;
  width: 30px;
  padding: 1px 3px 0 0;
  box-sizing: border-box;
}
.start svg {
  width: 14px;
  height: 14px;
}
.search {
  display: flex;
  align-items: center;
  box-sizing: border-box;
  width: 229px;
  padding: 2px 0 0 7px;
  gap: 6px;
  background: #f1f2f2;
  color: #555;
  font-size: 10px;
  letter-spacing: -0.33px;
}
.search svg {
  width: 13px;
  height: 13px;
}
.apps {
  display: flex;
}
.app {
  position: relative;
  display: flex;
  align-items: center;
  justify-content: center;
  box-sizing: border-box;
  width: 32.75px;
  padding-top: 1px;
}
.app svg {
  width: 16px;
  height: 16px;
}
.app.cortana svg,
.app.taskview svg {
  width: 15px;
  height: 15px;
}
.app.dm {
  background: #3c4746;
}
.badge {
  position: absolute;
  box-sizing: border-box;
  border-radius: 6px;
  color: #fff;
  font-size: 7px;
  line-height: 10px;
  text-align: center;
}
.badge.dark {
  right: 3px;
  bottom: 0;
  width: 12px;
  height: 12px;
  background: #1b2423;
  border: 1px solid #ddd;
}
.badge.red {
  right: 6px;
  bottom: 1px;
  width: 10px;
  height: 10px;
  background: #d0213f;
}
.tray {
  display: flex;
  align-items: center;
  gap: 3px;
  margin: 0 12px 0 auto;
}
.tray svg {
  width: 13px;
  height: 13px;
}
.clock {
  display: flex;
  flex-direction: column;
  align-items: center;
  width: 42px;
  color: #fff;
  line-height: 12px;
}
.tray .notify {
  margin-left: 9px;
}
</style>
